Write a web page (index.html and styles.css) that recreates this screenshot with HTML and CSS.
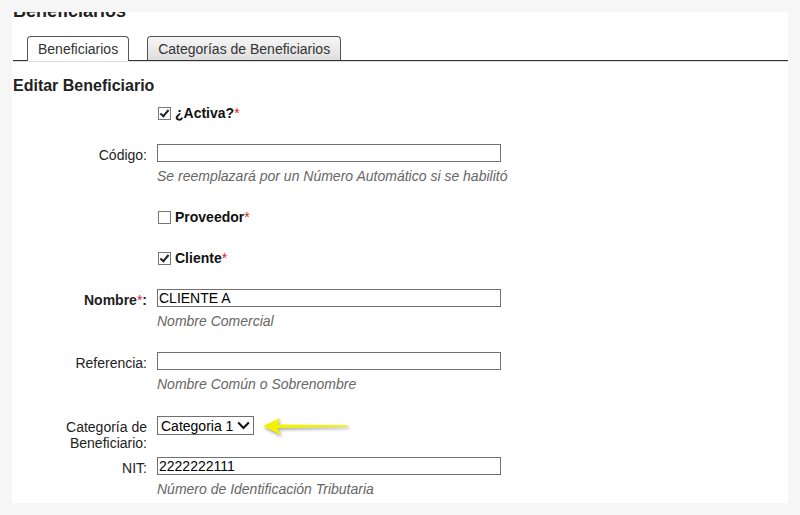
FILE: index.html
```html
<!DOCTYPE html>
<html lang="es">
<head>
  <meta charset="UTF-8">
  <meta name="viewport" content="width=device-width, initial-scale=1">
  <title>Beneficiarios</title>
  <link rel="stylesheet" href="styles.css">
</head>
<body>
  <div class="panel">
    <h1>Beneficiarios</h1>

    <ul class="tabs">
      <li class="tab active">Beneficiarios</li>
      <li class="tab">Categorías de Beneficiarios</li>
    </ul>

    <h3>Editar Beneficiario</h3>

    <form class="edit-form">
      <div class="row first">
        <span></span>
        <label class="check"><input type="checkbox" checked><span>¿Activa?<span class="req">*</span></span></label>
      </div>

      <div class="row">
        <label class="lbl" for="codigo">Código:</label>
        <input type="text" id="codigo" class="txt">
        <span class="hint">Se reemplazará por un Número Automático si se habilitó</span>
      </div>

      <div class="row gap-big">
        <span></span>
        <label class="check"><input type="checkbox"><span>Proveedor<span class="req">*</span></span></label>
      </div>

      <div class="row gap-big">
        <span></span>
        <label class="check"><input type="checkbox" checked><span>Cliente<span class="req">*</span></span></label>
      </div>

      <div class="row">
        <label class="lbl strong" for="nombre">Nombre<span class="req">*</span>:</label>
        <input type="text" id="nombre" class="txt" value="CLIENTE A">
        <span class="hint">Nombre Comercial</span>
      </div>

      <div class="row">
        <label class="lbl" for="referencia">Referencia:</label>
        <input type="text" id="referencia" class="txt">
        <span class="hint">Nombre Común o Sobrenombre</span>
      </div>

      <div class="row gap-mid">
        <label class="lbl" for="categoria">Categoría de<br>Beneficiario:</label>
        <div class="select-line">
          <span class="select-wrap">
            <select id="categoria">
              <option>Categoria 1</option>
            </select>
            <svg class="chevron" width="13" height="9" viewBox="0 0 13 9"><path d="M1.2 1.5 L6.5 7 L11.8 1.5" fill="none" stroke="#111" stroke-width="2"/></svg>
          </span>
          <svg class="arrow" width="92" height="22" viewBox="0 0 92 22">
            <path d="M3 10 L20 2 L17.5 8.5 L88 9.2 L88 10.8 L17.5 12 L21 19 Z" fill="#f4f200"/>
          </svg>
        </div>
      </div>

      <div class="row tight">
        <label class="lbl" for="nit">NIT:</label>
        <input type="text" id="nit" class="txt" value="2222222111">
        <span class="hint">Número de Identificación Tributaria</span>
      </div>
    </form>
  </div>
</body>
</html>
```

FILE: styles.css
```css
body {
  font-family: "Liberation Sans", Arial, sans-serif;
  font-size: 14px;
  background: #f6f6f6;
  color: #222;
  margin: 0;
  padding: 12px 12px 0;
}
.panel {
  background: #fff;
  height: 491px;
  overflow: hidden;
  padding-left: 1px;
}
h1 {
  font-size: 18px;
  line-height: 21px;
  margin: -11px 0 0;
}

/* Tabs */
.tabs {
  list-style: none;
  display: flex;
  align-items: flex-end;
  gap: 18px;
  margin: 14px 0 0;
  padding: 0 0 0 14px;
  height: 24px;
  border-bottom: 1px solid #333;
  box-shadow: 0 1px 0 #ddd;
}
.tab {
  height: 19px;
  padding: 4px 10px 0;
  line-height: 16px;
  border: 1px solid #555;
  border-bottom: none;
  border-radius: 4px 4px 0 0;
  color: #333;
  background: linear-gradient(#f7f7f7, #dedede);
}
.tab.active {
  height: 20px;
  margin-bottom: -1px;
  background: #fff;
}

h3 {
  font-size: 16px;
  line-height: 18px;
  margin: 16px 0 0;
}

/* Form */
.edit-form {
  margin: 0;
}
.row {
  display: grid;
  grid-template-columns: 134px 344px;
  column-gap: 10px;
  row-gap: 5px;
  align-items: start;
  margin-top: 23px;
}
.row.first {
  margin-top: 10px;
}
.row.gap-big {
  margin-top: 25px;
}
.row.gap-mid {
  margin-top: 24px;
}
.row.tight {
  margin-top: 6px;
}
.lbl {
  text-align: right;
  padding-top: 3px;
  line-height: 16px;
}
.lbl.strong {
  font-weight: bold;
}
.req {
  color: #d22;
  font-weight: normal;
}
.txt {
  box-sizing: border-box;
  width: 344px;
  height: 18px;
  margin: 0;
  padding: 0 1px;
  border: 1px solid #707070;
  font-family: inherit;
  font-size: 14px;
  color: #000;
}
.hint {
  grid-column: 2;
  font-style: italic;
  color: #666;
  line-height: 16px;
  white-space: nowrap;
}
.check {
  display: flex;
  align-items: center;
  gap: 4px;
  height: 16px;
  font-weight: bold;
  color: #111;
}
.check input {
  appearance: none;
  position: relative;
  width: 13px;
  height: 13px;
  margin: 0 0 0 1px;
  border: 1px solid #777;
  background: #fff;
}
.check input:checked::before {
  content: "";
  position: absolute;
  left: 3px;
  top: 0;
  width: 3px;
  height: 7px;
  border: solid #222;
  border-width: 0 2px 2px 0;
  transform: rotate(40deg);
}

/* Select with arrow */
.select-line {
  display: flex;
  align-items: flex-start;
}
.select-wrap {
  position: relative;
  display: inline-block;
}
.select-wrap select {
  appearance: none;
  box-sizing: border-box;
  width: 97px;
  height: 19px;
  margin: 0;
  padding: 0 0 0 3px;
  border: 1px solid #707070;
  border-radius: 0;
  background: #fff;
  font-family: inherit;
  font-size: 14px;
  color: #000;
}
.chevron {
  position: absolute;
  right: 4px;
  top: 5px;
  pointer-events: none;
}
.arrow {
  margin: 0 0 0 6px;
  filter: drop-shadow(1px 2px 1.5px rgba(0, 0, 0, 0.35));
}
```
